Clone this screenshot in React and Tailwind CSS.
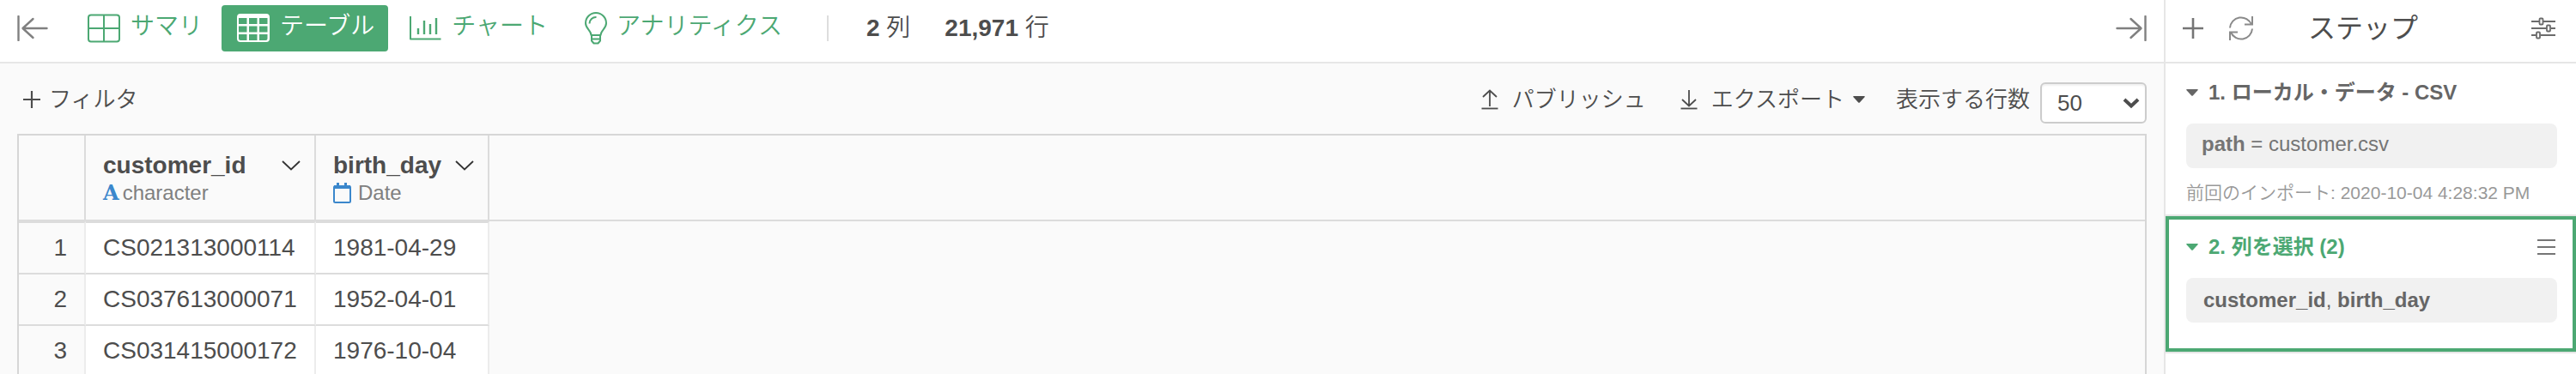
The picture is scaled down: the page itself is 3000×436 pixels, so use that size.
const rows = [
  { n: 1, id: "CS021313000114", birthDay: "1981-04-29" },
  { n: 2, id: "CS037613000071", birthDay: "1952-04-01" },
  { n: 3, id: "CS031415000172", birthDay: "1976-10-04" },
];

const CollapseIcon = ({ className }) => (
  <svg className={className} width="36" height="30" viewBox="0 0 36 30" fill="none" stroke="#808080" strokeLinecap="round">
    <path d="M1.5 1v28" strokeWidth="2.4" />
    <path d="M34.5 15H7M18.5 4L6.5 15l12 11" strokeWidth="2.4" strokeLinejoin="round" />
  </svg>
);

const SummaryIcon = () => (
  <svg width="38" height="34" viewBox="0 0 38 34" fill="none" stroke="currentColor" strokeWidth="2">
    <rect x="1" y="1.5" width="36" height="31" rx="3" />
    <path d="M19 1.5v31M1 17h36" />
  </svg>
);

const GridIcon = () => (
  <svg width="38" height="34" viewBox="0 0 38 34" fill="currentColor" fillRule="evenodd">
    <path
      d="M4 0h30a4 4 0 0 1 4 4v25a4 4 0 0 1-4 4H4a4 4 0 0 1-4-4V4a4 4 0 0 1 4-4z
        M2 5v7h9.500v-7zM14 5v7h9.500v-7zM26 5v7h9.500v-7z
        M2 14.500v7h9.500v-7zM14 14.500v7h9.500v-7zM26 14.500v7h9.500v-7z
        M2 24v5a2 2 0 0 0 2 2h7.500v-7zM14 24v7h9.500v-7zM26 24v7h7.500a2 2 0 0 0 2-2v-5z"
    />
  </svg>
);

const ChartIcon = () => (
  <svg width="38" height="34" viewBox="0 0 38 34" fill="none" stroke="currentColor" strokeWidth="2">
    <path d="M2 3v26.5h35.5" strokeLinejoin="round" />
    <path d="M11 17v7M18 8v16M25 12v12M32 5v19" strokeWidth="2.4" />
  </svg>
);

const BulbIcon = () => (
  <svg width="28" height="38" viewBox="0 0 28 38" fill="none" stroke="currentColor" strokeWidth="2">
    <path d="M8.5 27C8.500 21.500 2 19.500 2 13a12 12 0 0 1 24 0c0 6.500-6.500 8.500-6.500 14z" strokeLinejoin="round" />
    <path d="M6.500 13.500a7.500 7.500 0 0 1 8-7.500" />
    <path d="M9 27v6.500l2.500 3h5l2.500-3V27M9 31.500h10" strokeLinejoin="round" />
  </svg>
);

const PlusIcon = ({ size, stroke }) => (
  <svg width={size} height={size} viewBox="0 0 24 24" fill="none" stroke={stroke} strokeWidth="2.6">
    <path d="M12 0v24M0 12h24" />
  </svg>
);

const RefreshIcon = () => (
  <svg width="28" height="28" viewBox="0 0 28 28" fill="none" stroke="#8a8a8a" strokeWidth="2">
    <path d="M1 13.500A13 13 0 0 1 26 9.500M27 14.500A13 13 0 0 1 2 18.500" />
    <path d="M27 0v9.500h-9M1 28v-9.500h9" />
  </svg>
);

const SlidersIcon = () => (
  <svg width="28" height="26" viewBox="0 0 28 26" fill="none" stroke="#6b6b6b" strokeWidth="1.8">
    <path d="M0 5h9M14 5h14M0 13h18M23 13h5M0 21h5.5M10.5 21H28" />
    <rect x="9.5" y="1.5" width="4" height="7" rx="1" />
    <rect x="18" y="9.5" width="4" height="7" rx="1" />
    <rect x="6" y="17.5" width="4" height="7" rx="1" />
  </svg>
);

const ArrowIcon = ({ up }) => (
  <svg width="20" height="24" viewBox="0 0 20 24" fill="none" stroke="#4d4d4d" strokeWidth="1.8">
    {up ? <path d="M10 20V1.5M2 9l8-7.5L18 9" /> : <path d="M10 1v18.500M2 12l8 7.500 8-7.500" />}
    <path d="M.5 22.5h19" />
  </svg>
);

const Caret = () => (
  <svg width="14" height="8" viewBox="0 0 14 8" fill="currentColor">
    <path d="M1 0h12c1 0 1 .8.5 1.300L8 7.300c-.6.7-1.400.7-2 0L.5 1.300C0 .8 0 0 1 0z" />
  </svg>
);

const ChevronIcon = () => (
  <svg width="22" height="12" viewBox="0 0 22 12" fill="none" stroke="#333333" strokeWidth="1.8">
    <path d="M1 1l10 9.500L21 1" />
  </svg>
);

const CalendarIcon = () => (
  <svg width="21" height="24" viewBox="0 0 21 24" fill="none" stroke="#3b87cc">
    <rect x="1" y="4" width="19" height="19" rx="1.5" strokeWidth="2" />
    <path d="M1 5h19" strokeWidth="4" />
    <path d="M5.5 0v5M14.5 0v5" strokeWidth="3" />
  </svg>
);

const MenuIcon = () => (
  <svg width="21" height="18" viewBox="0 0 21 18" stroke="#757575" strokeWidth="2">
    <path d="M0 1h21M0 9h21M0 17h21" />
  </svg>
);

const Tab = ({ icon, label, active, className = "" }) => (
  <button
    type="button"
    aria-pressed={!!active}
    className={`flex h-[54px] items-center rounded pr-4 pl-[18px] ${active ? "bg-[#4ca873] text-white" : "text-[#4ca873]"} ${className}`}
  >
    {icon}
    <span className="pb-1 leading-8">{label}</span>
  </button>
);

const ColumnHeader = ({ name, icon, type, className = "" }) => (
  <th scope="col" className={`border-r-2 border-b-2 border-[#dcdcdc] pt-[19px] pr-4 pl-5 text-left align-top ${className}`}>
    <div className="flex items-center justify-between leading-8">
      {name}
      <button type="button" aria-label={`${name} menu`}>
        <ChevronIcon />
      </button>
    </div>
    <div className="flex items-center text-2xl leading-8 font-normal text-[#808080]">
      {icon}
      {type}
    </div>
  </th>
);

const Toolbar = () => (
  <div className="flex items-start pt-[22px] pr-5 pb-3 pl-[27px] text-[26px] leading-10">
    <button type="button" className="flex items-center gap-2.5">
      <PlusIcon size={20} stroke="#4d4d4d" />
      フィルタ
    </button>
    <div className="ml-auto flex items-start">
      <button type="button" className="flex items-center gap-4">
        <ArrowIcon up />
        パブリッシュ
      </button>
      <button type="button" className="ml-10 flex items-center gap-4">
        <ArrowIcon />
        エクスポート
        <span className="-ml-1.5">
          <Caret />
        </span>
      </button>
      <label htmlFor="row-count" className="ml-9">
        表示する行数
      </label>
      <div className="relative ml-3">
        <select
          id="row-count"
          defaultValue="50"
          className="h-12 w-[124px] appearance-none rounded-md border-2 border-[#cccccc] bg-white pl-[18px] leading-8 shadow-[inset_0_2px_2px_rgba(0,0,0,0.06)]"
        >
          <option>50</option>
          <option>100</option>
          <option>500</option>
        </select>
        <svg className="pointer-events-none absolute top-[18px] right-2" width="20" height="13" viewBox="0 0 20 13" fill="none" stroke="#4d4d4d" strokeWidth="4">
          <path d="M2 2l8 7.500L18 2" />
        </svg>
      </div>
    </div>
  </div>
);

const DataTable = () => (
  <div className="mx-5 min-h-0 flex-1 overflow-hidden border-x-2 border-t-2 border-[#d6d6d6]">
    <table className="w-full table-fixed border-separate border-spacing-0">
      <thead>
        <tr className="h-[100px]">
          <th className="w-[78px] border-r-2 border-b-2 border-[#dcdcdc]" />
          <ColumnHeader
            className="w-[268px]"
            name="customer_id"
            icon={<span className="mr-1 font-['DejaVu_Serif',serif] font-bold text-[#3b87cc]">A</span>}
            type="character"
          />
          <ColumnHeader
            className="w-[202px]"
            name="birth_day"
            icon={<span className="mr-2"><CalendarIcon /></span>}
            type="Date"
          />
          <th className="border-b-2 border-[#dcdcdc]" />
        </tr>
      </thead>
      <tbody>
        {rows.map((row, index) => {
          const cell = `border-r-2 border-r-[#ececec] border-b-2 border-b-[#dcdcdc] ${
            index === 0 ? "h-[62px] border-t-2 border-t-[#dcdcdc]" : "h-[60px]"
          }`;
          return (
            <tr key={row.n}>
              <td className={`${cell} pr-5 text-right`}>{row.n}</td>
              <td className={`${cell} bg-white pl-5`}>{row.id}</td>
              <td className={`${cell} bg-white pl-5`}>{row.birthDay}</td>
              <td />
            </tr>
          );
        })}
      </tbody>
    </table>
  </div>
);

const StepPanel = () => (
  <aside className="w-[480px] shrink-0 border-l-2 border-[#e6e6e6] bg-white text-2xl">
    <div className="flex h-[74px] items-center border-b-2 border-[#e6e6e6] pr-6 pb-1.5 pl-5">
      <button type="button" aria-label="ステップを追加">
        <PlusIcon size={24} stroke="#757575" />
      </button>
      <button type="button" aria-label="更新" className="ml-[30px]">
        <RefreshIcon />
      </button>
      <h2 className="ml-16 text-[32px] leading-10 font-normal">ステップ</h2>
      <button type="button" aria-label="設定" className="ml-auto">
        <SlidersIcon />
      </button>
    </div>

    <section className="border-b-2 border-[#e6e6e6] pt-[18px] pr-[22px] pb-3 pl-6 text-[#666666]">
      <h3 className="flex items-center gap-3 leading-8 font-bold">
        <Caret />
        1. ローカル・データ - CSV
      </h3>
      <p className="mt-5 rounded-lg bg-[#f1f1f1] px-[18px] pt-1.5 pb-2.5 leading-9 text-[#757575]">
        <b className="font-bold">path</b> = customer.csv
      </p>
      <p className="mt-4 text-[21px] leading-[26px] text-[#999999]">前回のインポート: 2020-10-04 4:28:32 PM</p>
    </section>

    <div className="border-b-2 border-[#e6e6e6]">
      <section className="border-4 border-[#4ca873] pt-4 pr-[18px] pb-[30px] pl-5">
        <div className="flex items-center justify-between">
          <h3 className="flex items-center gap-3 leading-8 font-bold text-[#4ca873]">
            <Caret />
            2. 列を選択 (2)
          </h3>
          <button type="button" aria-label="メニュー" className="mr-0.5">
            <MenuIcon />
          </button>
        </div>
        <p className="mt-5 rounded-lg bg-[#f1f1f1] px-5 py-2 leading-9 text-[#666666]">
          <b className="font-bold">customer_id</b>, <b className="font-bold">birth_day</b>
        </p>
      </section>
    </div>
  </aside>
);

const App = () => {
  return (
    <div className="flex h-screen overflow-hidden bg-[#fafafa] font-['Liberation_Sans','Noto_Sans_CJK_JP',sans-serif] text-[28px] font-[350] text-[#4d4d4d]">
      <main className="flex min-w-0 flex-1 flex-col">
        <header className="flex h-[74px] items-center border-b-2 border-[#e6e6e6] bg-white px-5 pb-1.5">
          <button type="button" aria-label="左パネルを閉じる">
            <CollapseIcon />
          </button>
          <nav className="ml-7 flex">
            <Tab className="gap-3" icon={<SummaryIcon />} label="サマリ" />
            <Tab className="ml-1.5 gap-3" icon={<GridIcon />} label="テーブル" active />
            <Tab className="ml-1.5 gap-3" icon={<ChartIcon />} label="チャート" />
            <Tab className="ml-2 gap-2.5" icon={<BulbIcon />} label="アナリティクス" />
          </nav>
          <div className="ml-9 h-[30px] w-0.5 bg-[#dddddd]" />
          <span className="ml-11">
            <b className="font-bold">2</b> 列
          </span>
          <span className="ml-10">
            <b className="font-bold">21,971</b> 行
          </span>
          <button type="button" aria-label="右パネルを閉じる" className="ml-auto">
            <CollapseIcon className="rotate-180" />
          </button>
        </header>
        <Toolbar />
        <DataTable />
      </main>
      <StepPanel />
    </div>
  );
};
export default App;
